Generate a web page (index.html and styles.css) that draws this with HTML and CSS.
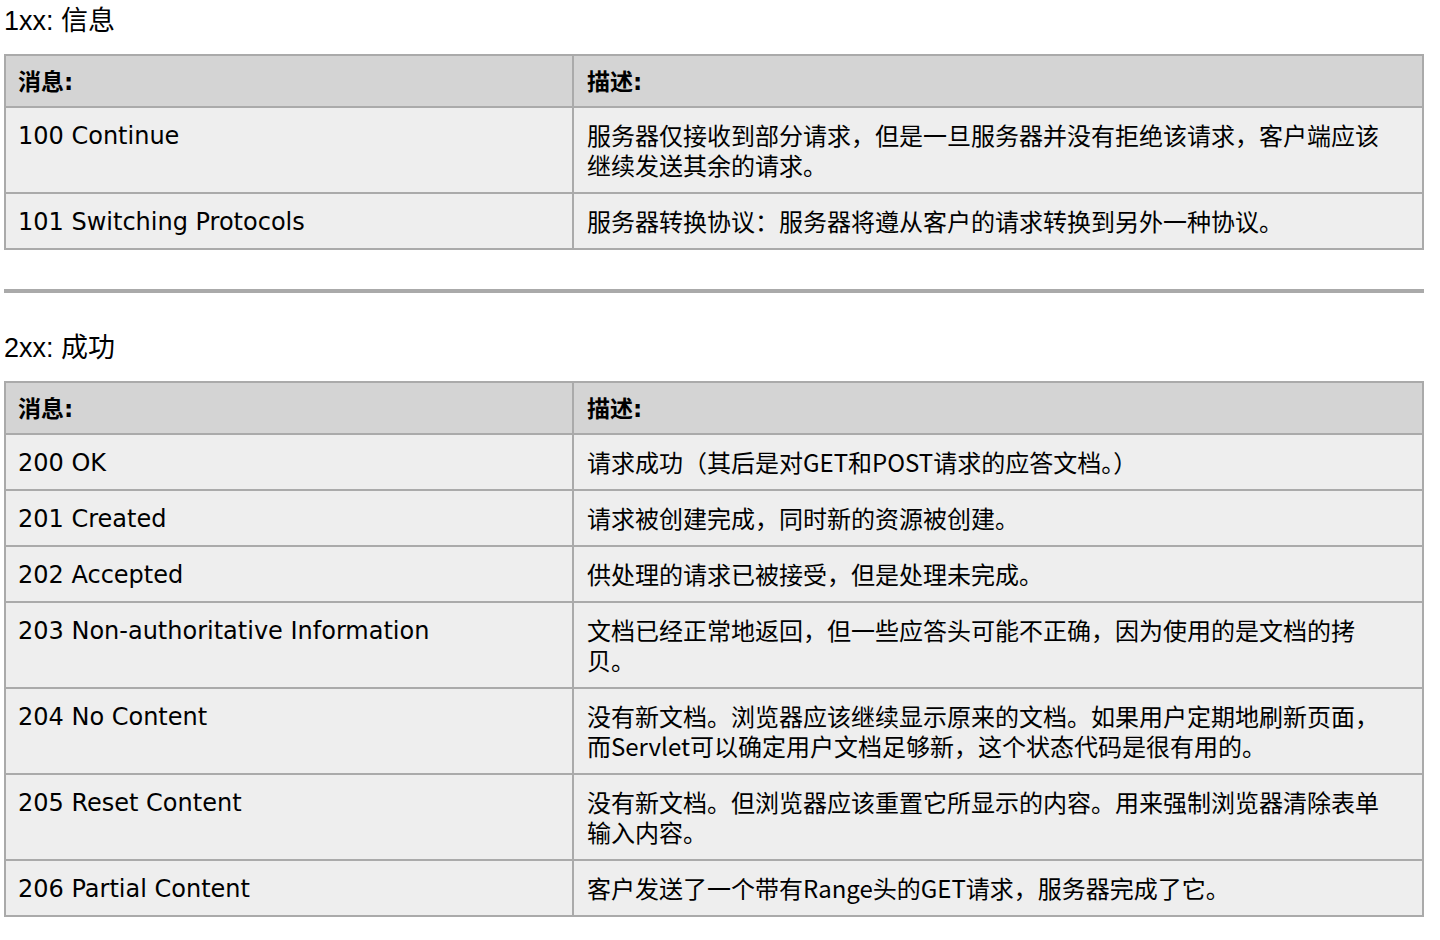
FILE: index.html
```html
<!DOCTYPE html>
<html lang="zh-CN">
<head>
<meta charset="utf-8">
<title>HTTP 状态码</title>
<link rel="stylesheet" href="styles.css">
</head>
<body>
<div class="page">
  <h2 class="group-title">1xx: 信息</h2>
  <table class="status-table">
    <thead>
      <tr><th class="col-msg">消息:</th><th class="col-desc">描述:</th></tr>
    </thead>
    <tbody>
      <tr><td class="col-msg">100 Continue</td><td class="col-desc">服务器仅接收到部分请求，但是一旦服务器并没有拒绝该请求，客户端应该继续发送其余的请求。</td></tr>
      <tr><td class="col-msg">101 Switching Protocols</td><td class="col-desc">服务器转换协议：服务器将遵从客户的请求转换到另外一种协议。</td></tr>
    </tbody>
  </table>

  <hr class="divider">

  <h2 class="group-title second">2xx: 成功</h2>
  <table class="status-table">
    <thead>
      <tr><th class="col-msg">消息:</th><th class="col-desc">描述:</th></tr>
    </thead>
    <tbody>
      <tr><td class="col-msg">200 OK</td><td class="col-desc">请求成功（其后是对GET和POST请求的应答文档。）</td></tr>
      <tr><td class="col-msg">201 Created</td><td class="col-desc">请求被创建完成，同时新的资源被创建。</td></tr>
      <tr><td class="col-msg">202 Accepted</td><td class="col-desc">供处理的请求已被接受，但是处理未完成。</td></tr>
      <tr><td class="col-msg">203 Non-authoritative Information</td><td class="col-desc">文档已经正常地返回，但一些应答头可能不正确，因为使用的是文档的拷贝。</td></tr>
      <tr><td class="col-msg">204 No Content</td><td class="col-desc">没有新文档。浏览器应该继续显示原来的文档。如果用户定期地刷新页面，而Servlet可以确定用户文档足够新，这个状态代码是很有用的。</td></tr>
      <tr><td class="col-msg">205 Reset Content</td><td class="col-desc">没有新文档。但浏览器应该重置它所显示的内容。用来强制浏览器清除表单输入内容。</td></tr>
      <tr><td class="col-msg">206 Partial Content</td><td class="col-desc">客户发送了一个带有Range头的GET请求，服务器完成了它。</td></tr>
    </tbody>
  </table>
</div>
</body>
</html>
```

FILE: styles.css
```css
html, body {
  margin: 0;
  padding: 0;
  background: #ffffff;
}

.page {
  padding: 0 16px 0 4px;
  width: 1420px;
}

.group-title {
  margin: 0 0 12px 0;
  height: 42px;
  line-height: 42px;
  font-family: "Liberation Sans", "Noto Sans CJK SC", sans-serif;
  font-size: 27px;
  font-weight: normal;
  color: #000;
}

.group-title.second {
  margin-top: 34px;
}

.divider {
  margin: 39px 0 0 0;
  border: 0;
  height: 4px;
  background: #aaaaaa;
}

.status-table {
  box-sizing: border-box;
  width: 1420px;
  table-layout: fixed;
  border-collapse: separate;
  border-spacing: 0;
  border: 2px solid #aaaaaa;
  font-family: "DejaVu Sans", Verdana, "Noto Sans CJK SC", sans-serif;
  font-size: 24px;
  color: #000;
}

.status-table th,
.status-table td {
  box-sizing: border-box;
  padding: 13px 13px 11px 13px;
  text-align: left;
  vertical-align: top;
}

.status-table th {
  background: #d4d4d4;
  font-weight: bold;
  line-height: 26px;
  font-size: 23px;
}

.status-table td {
  background: #eeeeee;
  line-height: 30px;
  font-weight: normal;
  border-top: 2px solid #aaaaaa;
}

.status-table .col-msg {
  width: 566px;
  padding-left: 12px;
}

.status-table .col-desc {
  border-left: 2px solid #aaaaaa;
  padding-right: 32px;
}

.status-table td.col-desc {
  font-family: "Noto Sans CJK SC", "DejaVu Sans", sans-serif;
  padding-top: 12px;
  padding-bottom: 12px;
}
```
